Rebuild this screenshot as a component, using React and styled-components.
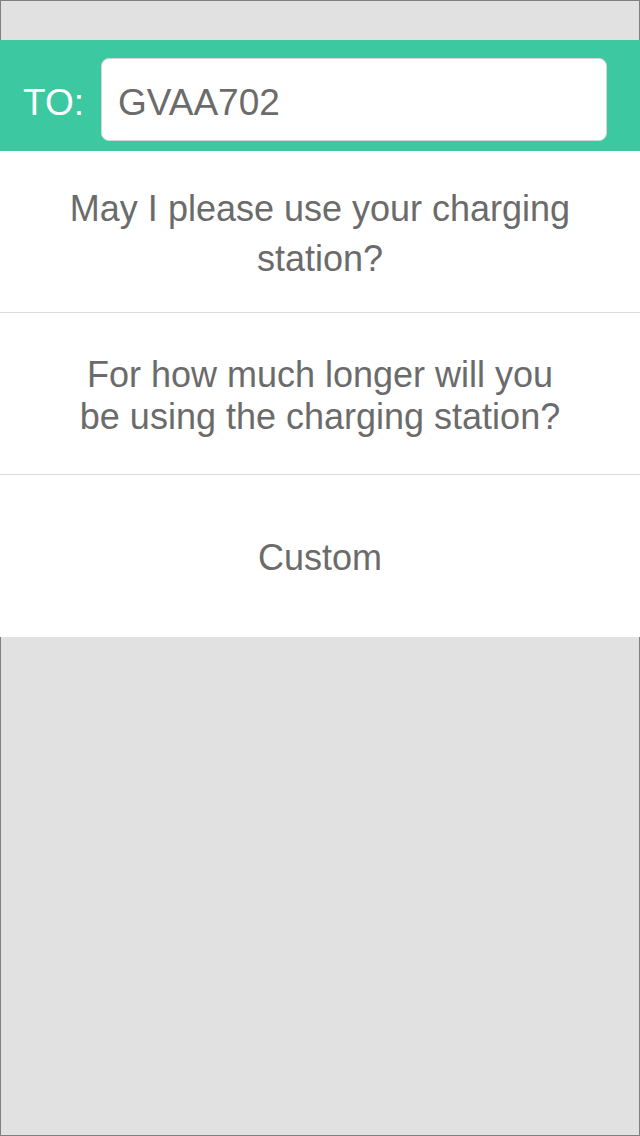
import React from 'react';
import styled, { createGlobalStyle } from 'styled-components';

const GlobalStyle = createGlobalStyle`
  html, body {
    margin: 0;
    padding: 0;
    background: #e1e1e1;
    font-family: "Liberation Sans", Arial, Helvetica, sans-serif;
  }
  * { box-sizing: border-box; }
`;

const Frame = styled.div`
  min-height: 1136px;
  background: #e1e1e1;
  border: 1px solid #808080;
  padding-top: 39px;
`;

const Sheet = styled.div`
  margin: 0 -1px;
`;

const Header = styled.div`
  display: flex;
  align-items: center;
  gap: 17px;
  height: 111px;
  padding: 18px 33px 10px 23px;
  background: #3cc8a0;
`;

const Label = styled.span`
  color: #ffffff;
  font-size: 37px;
  line-height: 1;
  margin-top: 6px;
`;

const Recipient = styled.input`
  flex: 1;
  min-width: 0;
  height: 83px;
  padding: 6px 16px 0;
  border: 1px solid #d6d6d6;
  border-radius: 8px;
  background: #ffffff;
  color: #6b6b6b;
  font-family: inherit;
  font-size: 37px;
  outline: none;
`;

const Option = styled.button`
  display: flex;
  align-items: center;
  justify-content: center;
  width: 100%;
  height: 162px;
  padding: ${p => (p.$pad ? `4px ${p.$pad}px 0` : 0)};
  background: #ffffff;
  border: none;
  border-bottom: ${p => (p.$last ? 'none' : '1px solid #dcdcdc')};
  color: #6b6b6b;
  font-family: inherit;
  font-size: 36px;
  line-height: ${p => p.$lh}px;
  text-align: center;
  cursor: pointer;
`;

const options = [
  { text: 'May I please use your charging station?', lh: 50, pad: 60 },
  { text: 'For how much longer will you be using the charging station?', lh: 42, pad: 70 },
  { text: 'Custom', lh: 42, pad: 70 },
];

export default function App() {
  return (
    <>
      <GlobalStyle />
      <Frame>
        <Sheet>
          <Header>
            <Label>TO:</Label>
            <Recipient defaultValue="GVAA702" readOnly />
          </Header>
          {options.map((o, i) => (
            <Option key={o.text} $lh={o.lh} $pad={o.pad} $last={i === options.length - 1}>
              {o.text}
            </Option>
          ))}
        </Sheet>
      </Frame>
    </>
  );
}
